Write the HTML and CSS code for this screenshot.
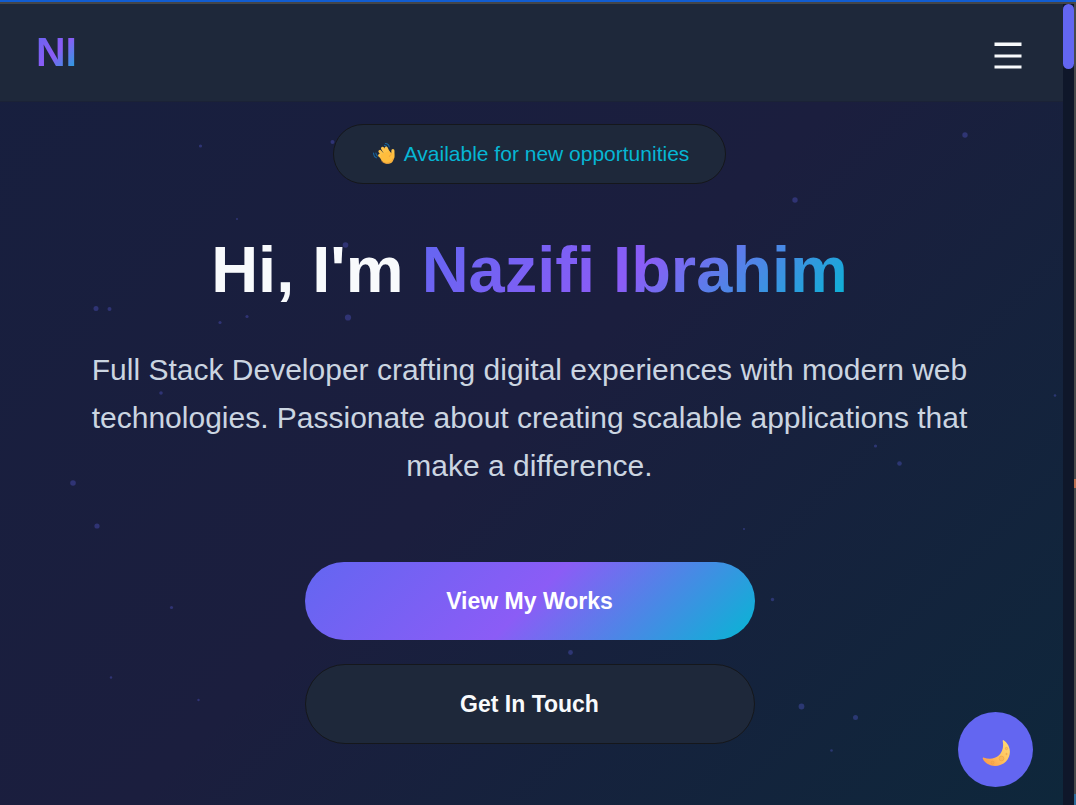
FILE: index.html
```html
<!DOCTYPE html>
<html lang="en">
<head>
<meta charset="utf-8">
<meta name="viewport" content="width=device-width, initial-scale=1">
<title>Nazifi Ibrahim</title>
<link rel="stylesheet" href="styles.css">
</head>
<body>
<div class="frame">
  <div class="page">
    <svg class="particles" aria-hidden="true">
      <circle cx="200.500" cy="146" r="1.600"/><circle cx="332.500" cy="142" r="2"/>
      <circle cx="965" cy="135" r="2.700"/><circle cx="795" cy="200" r="2.700"/>
      <circle cx="237" cy="219" r="1"/><circle cx="345.500" cy="245" r="2.800"/>
      <circle cx="96" cy="308.500" r="2.500"/><circle cx="109.500" cy="309" r="2"/>
      <circle cx="220" cy="322.500" r="1.600"/><circle cx="247" cy="316.500" r="1.600"/>
      <circle cx="348" cy="317.500" r="3.100"/><circle cx="161" cy="393" r="1.800"/>
      <circle cx="73" cy="483" r="2.800"/><circle cx="97" cy="526" r="2.600"/>
      <circle cx="1055" cy="395.500" r="1.300"/><circle cx="875.500" cy="446" r="1.600"/>
      <circle cx="899.500" cy="463.500" r="2.300"/><circle cx="744" cy="529" r="1.100"/>
      <circle cx="772.500" cy="599.500" r="1.700"/><circle cx="570.500" cy="652.500" r="2.400"/>
      <circle cx="171.500" cy="607.500" r="1.600"/><circle cx="111" cy="677.500" r="1.200"/>
      <circle cx="198.500" cy="700" r="1.200"/><circle cx="801.500" cy="706.500" r="2.900"/>
      <circle cx="855.500" cy="717.500" r="2.500"/><circle cx="831.500" cy="750.500" r="1.300"/>
      <circle cx="509" cy="740" r="2"/>
    </svg>
    <header class="navbar">
      <a class="logo gradient-text" href="#home">NI</a>
      <button class="menu-button" type="button" aria-label="Open menu">
        <svg width="28" height="28" viewBox="0 0 28 28" aria-hidden="true"><path d="M0.500 0.500h27v3.500h-27zM0.500 12.500h27v3h-27zM0.500 23.500h27v3h-27z" fill="#f8fafc"/></svg>
      </button>
    </header>
    <main class="hero" id="home">
      <p class="badge">
        <svg class="wave" width="22" height="22" viewBox="1 1 23 23" aria-hidden="true">
          <path d="M1.500 11.500q.2 3.800 3 5M4 11.500q.2 2 1.700 3M14 1.500q3.500.3 4 3.700M13 3.500q2 .1 2.600 2" fill="none" stroke="#17649c" stroke-width="1.200" stroke-linecap="round"/>
          <g fill="none" stroke="#ffc44a" stroke-width="3.300" stroke-linecap="round"><path d="M8 14l5 4M8.300 9.800l6 7M11 6.700l5 8M14.700 6.300l4 8M21.800 9v7"/></g>
          <path d="M9.500 13l8.200-3.800 2.600 2.600 2.800.2c.4 6.800-1.700 10.500-6 10.800-4.300.3-7-2.500-8.500-6z" fill="#ffbd3d"/>
          <path d="M9.500 19.300c3.500 4.500 11 3.500 12.800-2.500M18 15.500c.7-1.700 1.700-2.600 2.500-3" fill="none" stroke="#ed983c" stroke-width=".8"/>
        </svg>
        <span>Available for new opportunities</span>
      </p>
      <h1 class="title">Hi, I'm <span class="gradient-text">Nazifi Ibrahim</span></h1>
      <p class="lead">Full Stack Developer crafting digital experiences with modern web technologies. Passionate about creating scalable applications that make a difference.</p>
      <div class="actions">
        <a class="button button-primary" href="#works">View My Works</a>
        <a class="button button-secondary" href="#contact">Get In Touch</a>
      </div>
    </main>
    <button class="theme-toggle" type="button" aria-label="Switch theme">
      <svg width="30" height="30" viewBox="0 0 30 30" aria-hidden="true">
        <defs><linearGradient id="moon" x1="0" y1="1" x2="1" y2="0"><stop offset="0" stop-color="#fb9446"/><stop offset=".55" stop-color="#ffc760"/><stop offset="1" stop-color="#ffdb78"/></linearGradient></defs>
        <path d="M21.500 2.200C29 7 30 17 24 23.500 17 30.500 4.500 29 .8 20.800c-.3-1 .3-1.500 1.300-1C12 23.500 23.500 17 20.700 3c0-.8.300-1.100.8-.8z" fill="url(#moon)"/>
        <g fill="#f1a94b" fill-opacity=".4" stroke="#e89b43" stroke-width=".5"><circle cx="19.500" cy="20.500" r="2.400"/><circle cx="10.500" cy="24.500" r="1.500"/><circle cx="24.500" cy="10.500" r="1.200"/><circle cx="24.500" cy="16" r=".7"/></g>
      </svg>
    </button>
  </div>
  <div class="scrollbar"><div class="scroll-thumb"></div></div>
  <div class="edge"></div>
</div>
</body>
</html>
```
FILE: styles.css
```css
:root {
  --gradient: linear-gradient(135deg, #6366f1 0%, #8b5cf6 50%, #06b6d4 100%);
  --surface: #1e283a;
  --ink: #f8fafc;
}

* {
  box-sizing: border-box;
}

body {
  margin: 0;
  background: #0f172a;
  color: var(--ink);
  font-family: "Liberation Sans", Arial, sans-serif;
}

.frame {
  display: flex;
  min-height: 100vh;
  border-top: 2px solid #115cd0;
}

.page {
  position: relative;
  flex: 1;
  min-width: 0;
  border-top: 2px solid #444547;
  background: linear-gradient(135deg, #171f3e 0%, #1b1e3e 50%, #0e273b 100%);
}

.particles {
  position: absolute;
  left: 0;
  top: -4px;
  width: 100%;
  height: 100%;
  fill: #6366f1;
  fill-opacity: 0.3;
}

.navbar {
  position: relative;
  display: flex;
  align-items: center;
  justify-content: space-between;
  padding: 24px 41px 24px 36px;
  background: var(--surface);
  border-bottom: 1px solid #1b2236;
}

.logo {
  font-size: 41px;
  line-height: 49px;
  font-weight: 700;
  text-decoration: none;
}

.gradient-text {
  background: var(--gradient);
  -webkit-background-clip: text;
  background-clip: text;
  color: transparent;
}

.menu-button {
  display: flex;
  padding: 6px 0 0;
  border: 0;
  background: none;
}

.hero {
  position: relative;
  display: flex;
  flex-direction: column;
  align-items: center;
  padding: 22px 28px 60px 24px;
  text-align: center;
}

.badge {
  display: flex;
  align-items: center;
  gap: 9px;
  margin: 0 0 46px;
  padding: 17px 36px 17px 39px;
  border: 1px solid #15171b;
  border-radius: 48px;
  background: var(--surface);
  color: #06b6d4;
  font-size: 21px;
  line-height: 24px;
}

.title {
  margin: 0 0 37px;
  font-size: 65px;
  line-height: 79px;
  font-weight: 700;
}

.lead {
  max-width: 900px;
  margin: 0 0 72px;
  color: #cbd5e1;
  font-size: 30px;
  line-height: 48px;
}

.actions {
  display: flex;
  flex-direction: column;
  gap: 24px;
  width: 100%;
  max-width: 450px;
}

.button {
  padding: 24px 48px;
  border-radius: 48px;
  color: var(--ink);
  font-size: 23px;
  line-height: 30px;
  font-weight: 700;
  text-decoration: none;
}

.button-primary {
  background: var(--gradient);
  color: #fff;
}

.button-secondary {
  border: 1px solid #15171b;
  background: var(--surface);
}

.theme-toggle {
  position: fixed;
  right: 43px;
  bottom: 18px;
  display: flex;
  align-items: center;
  justify-content: center;
  width: 75px;
  height: 75px;
  padding: 6px 0 0 3px;
  border: 0;
  border-radius: 50%;
  background: #6366f1;
}

.scrollbar {
  width: 11px;
  border-top: 2px solid #444547;
  background: #0f172a;
}

.scroll-thumb {
  height: 65px;
  border-radius: 6px;
  background: #6366f1;
}

.edge {
  width: 2px;
  background: linear-gradient(#484a4b 0 477px, #b96f50 477px 486px, #484a4b 486px 792px, #2d6e9c 792px);
}
```
